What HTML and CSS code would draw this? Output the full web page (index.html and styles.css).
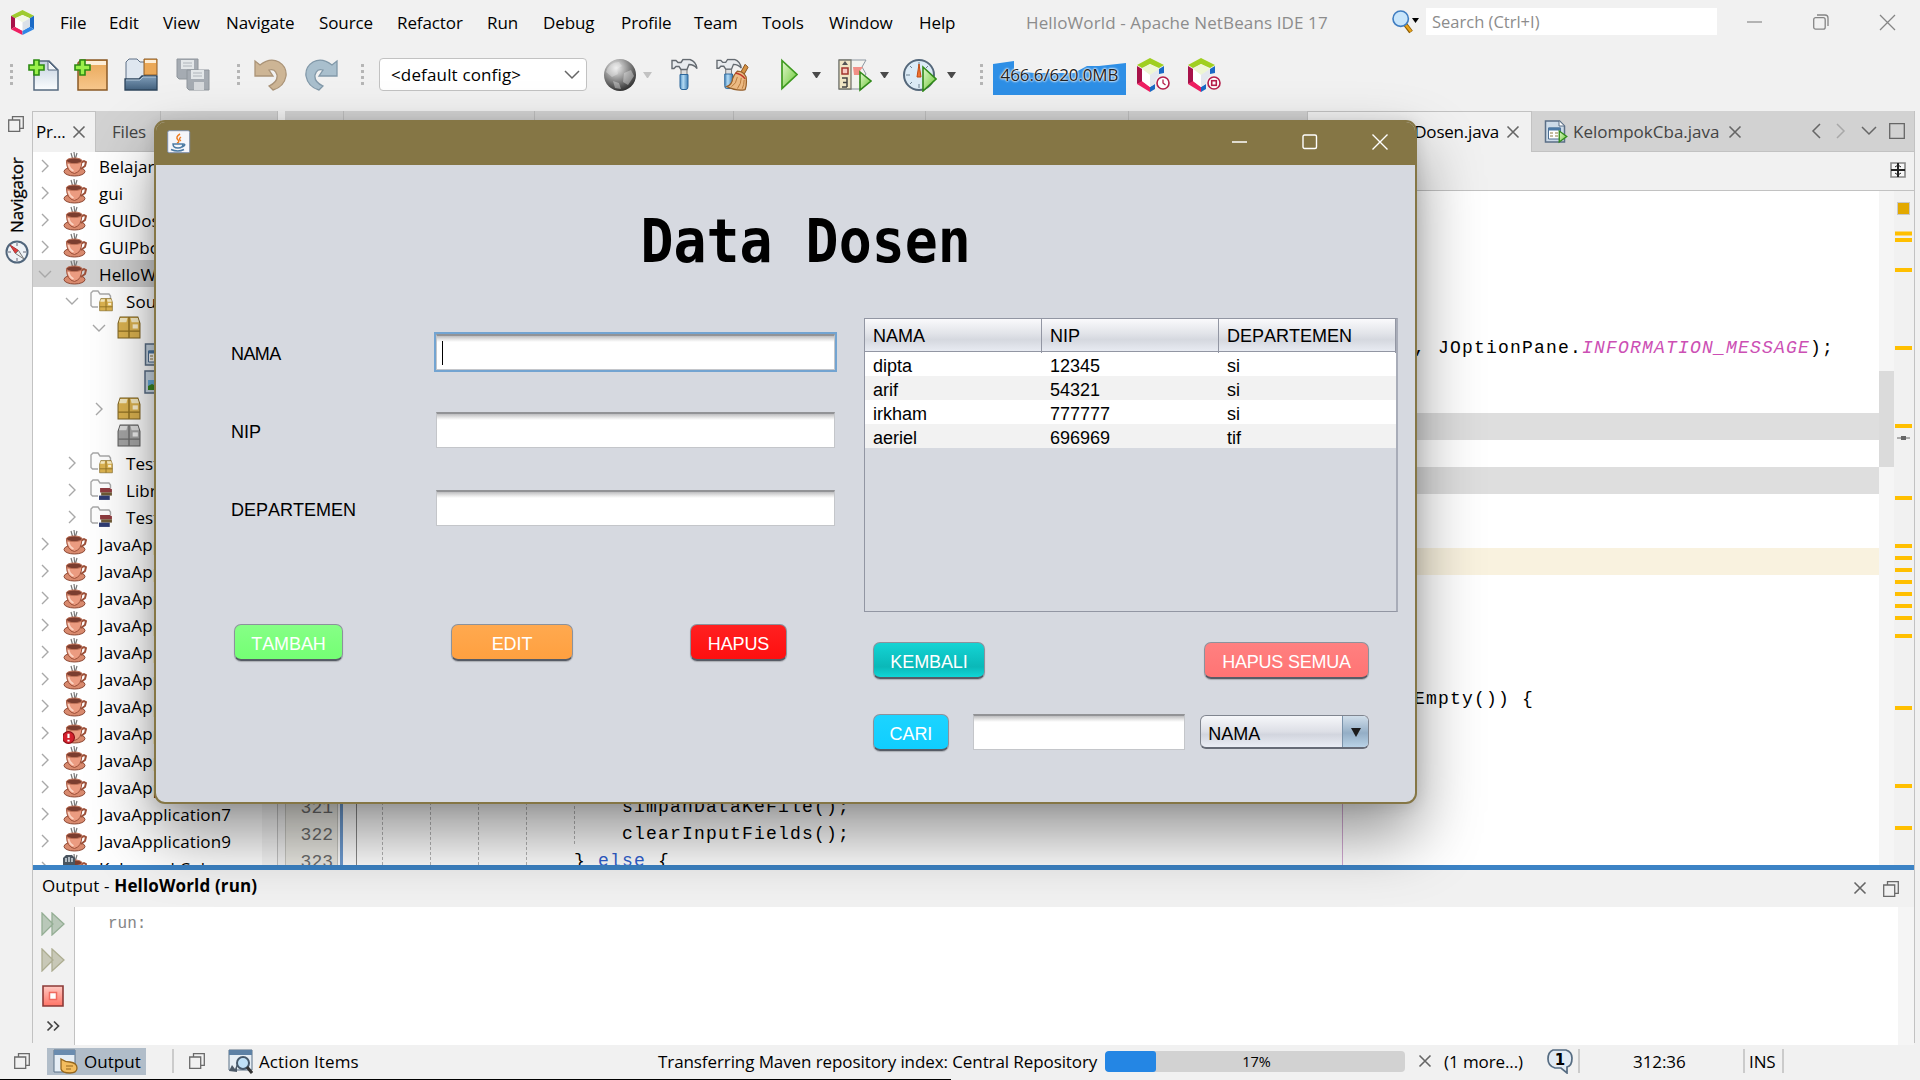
FILE: index.html
```html
<!DOCTYPE html>
<html lang="en">
<head>
<meta charset="utf-8">
<title>HelloWorld - Apache NetBeans IDE 17</title>
<link rel="stylesheet" href="styles.css">
</head>
<body>
<svg width="0" height="0" class="defs">
  <defs>
    <linearGradient id="gGreen" x1="0" y1="0" x2="1" y2="1"><stop offset="0" stop-color="#e3f7cf"/><stop offset="1" stop-color="#69c832"/></linearGradient>
    <linearGradient id="gPaper" x1="0" y1="0" x2="0" y2="1"><stop offset="0" stop-color="#c3d0df"/><stop offset="1" stop-color="#fbfdfe"/></linearGradient>
    <linearGradient id="gOrange" x1="0" y1="0" x2="0" y2="1"><stop offset="0" stop-color="#e9a758"/><stop offset="1" stop-color="#f7c78c"/></linearGradient>
    <linearGradient id="gSteel" x1="0" y1="0" x2="0" y2="1"><stop offset="0" stop-color="#7f9db9"/><stop offset="1" stop-color="#42607d"/></linearGradient>
    <linearGradient id="gBlue" x1="0" y1="0" x2="1" y2="0"><stop offset="0" stop-color="#4f8fc4"/><stop offset=".4" stop-color="#b5dcf5"/><stop offset="1" stop-color="#3f7fb5"/></linearGradient>
    <radialGradient id="gBall" cx=".38" cy=".28" r=".75"><stop offset="0" stop-color="#f2f2f2"/><stop offset=".45" stop-color="#9a9a9a"/><stop offset="1" stop-color="#2e2e2e"/></radialGradient>
    <linearGradient id="gStop" x1="0" y1="0" x2="0" y2="1"><stop offset="0" stop-color="#ffc9c2"/><stop offset="1" stop-color="#ff7466"/></linearGradient>
    <symbol id="cup" viewBox="0 0 24 25">
      <path d="M8 1l2 7M11 0l1 8M14 1l-2 7" stroke="#777" stroke-width="1.2" fill="none"/>
      <ellipse cx="11.500" cy="19.500" rx="10.500" ry="4.500" fill="#d98a6e" stroke="#8e4a36"/>
      <path d="M18 10.500l3-1.500 2 1-1 4-4 3" fill="none" stroke="#9c5039" stroke-width="2"/>
      <path d="M3.500 9q0 11 8 12.500 7-1.500 7.500-12.500z" fill="#eb9b80" stroke="#9c5039"/>
      <ellipse cx="11.200" cy="8.800" rx="7.800" ry="2.800" fill="#7b3d2f" stroke="#c07258"/>
      <path d="M5.500 12q1 5 5 7" stroke="#fbd3c2" stroke-width="1.800" fill="none"/>
    </symbol>
    <symbol id="pkg" viewBox="0 0 23 23">
      <path d="M3 1h17l2 6v14H1V7z" fill="#dcb350" stroke="#7d6320"/>
      <path d="M3 2h7l-1 4H2zM13 2h7l1 4h-7z" fill="#f6ebc4"/>
      <path d="M1 14.500h21M11.500 1v20" stroke="#8f7022" stroke-width="1.400"/>
      <path d="M15 8h5v4h-5z" fill="#fff3cf"/>
    </symbol>
    <symbol id="pkgGray" viewBox="0 0 23 23">
      <path d="M3 1h17l2 6v14H1V7z" fill="#a5a5a5" stroke="#5d5d5d"/>
      <path d="M3 2h7l-1 4H2zM13 2h7l1 4h-7z" fill="#dedede"/>
      <path d="M1 14.500h21M11.500 1v20" stroke="#6d6d6d" stroke-width="1.400"/>
      <path d="M15 8h5v4h-5z" fill="#eee"/>
    </symbol>
    <symbol id="folder" viewBox="0 0 22 21">
      <path d="M8 17H2.500L1 15.500V3l2-2h5l2 3h9l1.500 2v3" fill="#fdfdfd" stroke="#a8a8a8" stroke-width="1.400"/>
    </symbol>
    <symbol id="chevR" viewBox="0 0 12 14"><path d="M3 1l6 6-6 6" fill="none" stroke="#a8a8a8" stroke-width="1.400"/></symbol>
    <symbol id="chevD" viewBox="0 0 14 12"><path d="M1 3l6 6 6-6" fill="none" stroke="#a8a8a8" stroke-width="1.400"/></symbol>
    <symbol id="x" viewBox="0 0 14 14"><path d="M1.500 1.500l11 11M12.500 1.500l-11 11" fill="none" stroke="currentColor" stroke-width="1.600"/></symbol>
    <symbol id="float" viewBox="0 0 16 16"><path d="M4.500 4V.700h10.800v11.600H12M.700 4h11v11.300H.700z" fill="none" stroke="#6a6a6a" stroke-width="1.300"/></symbol>
    <symbol id="formfile" viewBox="0 0 24 24">
      <path d="M1.500 1h14l5 5v16h-19z" fill="#cddbe8" stroke="#5b6f86" stroke-width="1.500"/>
      <path d="M15 1v5h5" fill="#fff" stroke="#5b6f86"/>
      <path d="M4.500 8h12v11h-12z" fill="#fff" stroke="#4d6e91"/><path d="M4.500 9h12" stroke="#4d7aa7" stroke-width="3"/>
      <path d="M6 13h3m2 0h3M6 16h3m2 0h3" stroke="#8a7a42"/>
    </symbol>
    <symbol id="runBadge" viewBox="0 0 12 16"><path d="M1.500 1.500l9 6.500-9 6.500z" fill="url(#gGreen)" stroke="#318a1a" stroke-width="1.600"/></symbol>
    <symbol id="nb" viewBox="0 0 22 30">
      <path d="M11 0l11 7v16L11 30 0 23V7z" fill="#fff"/>
      <path d="M11 0l11 7-4 3-7-4-7 4-4-3z" fill="#9fcb2f"/>
      <path d="M0 7l4 3v10l-4 3z" fill="#a8124a"/><path d="M0 23l4-3 7 5v5z" fill="#ee1f61"/>
      <path d="M22 7l-4 3v10l4 3z" fill="#1b6ac6"/><path d="M22 23l-4-3-7 5v5z" fill="#2f86e6"/>
      <path d="M11 6l7 4-7 5-7-5z" fill="#f2f7e4"/><path d="M4 10l7 5v10l-7-5z" fill="#fff"/><path d="M18 10l-7 5v10l7-5z" fill="#dbe1e8"/>
    </symbol>
    <symbol id="nbBig" viewBox="0 0 34 34">
      <path d="M14 0l14 7-5 3-9-4-8 4-5-3z" fill="#a0cf20"/>
      <path d="M1 8l5 3v13l-5 2z" fill="#a8124a"/><path d="M1 26l5-3 8 6v5z" fill="#ee1f61"/>
      <path d="M28 8l-5 3v5l5-1zM14 29l5-3v5l-5 3z" fill="#1b6ac6"/>
      <path d="M14 6l9 5-9 6-8-6z" fill="#eef6d3"/><path d="M6 11l8 6v12l-8-6z" fill="#fff"/><path d="M23 11l-9 6v12l6-4 3-6z" fill="#e4e8ee"/>
      <circle cx="27" cy="25" r="8" fill="#f1f1f1"/><circle cx="27" cy="25" r="6" fill="#fff" stroke="#b51f4b" stroke-width="1.600"/>
    </symbol>
    <symbol id="hammer" viewBox="0 0 27 32">
      <path d="M10 11h6v8h-6z" fill="#ddd" stroke="#777"/>
      <path d="M1 2h4l2 2h3l2-3h7q6 2 7 9-3-4-8-4l-2 5h-6L8 8H5L3 10H1z" fill="#e8ebee" stroke="#646a70" stroke-width="1.400"/>
      <path d="M9 16h8v12q0 3-2 3h-4q-2 0-2-3z" fill="url(#gBlue)" stroke="#2d679b"/>
    </symbol>
    <symbol id="ff" viewBox="0 0 24 24"><path d="M1 1l11 11L1 23zM11 1l12 11-12 11z" stroke="currentColor" fill="currentColor" fill-opacity=".6" stroke-width="1.300"/></symbol>
    <symbol id="errors" viewBox="0 0 12 12"><circle cx="6" cy="6" r="5.500" fill="#d41f2c" stroke="#870d15"/><path d="M5 2.500h2v4H5zM5 8h2v1.800H5z" fill="#fff"/></symbol>
  </defs>
</svg>

<div class="ide">
  <header class="menubar">
    <svg class="logo" viewBox="0 0 22 30" preserveAspectRatio="none"><use href="#nb"/></svg>
    <nav class="menus"><span>File</span><span>Edit</span><span>View</span><span>Navigate</span><span>Source</span><span>Refactor</span><span>Run</span><span>Debug</span><span>Profile</span><span>Team</span><span>Tools</span><span>Window</span><span>Help</span></nav>
    <span class="app-title">HelloWorld - Apache NetBeans IDE 17</span>
    <svg class="search-icon" viewBox="0 0 28 24"><path d="M13 14l6 8" stroke="#8a5a00" stroke-width="4.500"/><path d="M13 14l6 7.500" stroke="#e8a21a" stroke-width="2.500"/><circle cx="8.700" cy="8.700" r="7.700" fill="#c8e5fb" stroke="#3f7dc1" stroke-width="1.600"/><path d="M20 8h7l-3.500 5z" fill="#000"/></svg>
    <span class="search">Search (Ctrl+I)</span>
    <span class="wincontrols">
      <svg width="16" height="16" viewBox="0 0 16 16"><path d="M0 8h15" stroke="#8b8b8b" stroke-width="1.200"/></svg>
      <svg width="16" height="16" viewBox="0 0 16 16"><rect x=".7" y="3.700" width="11.500" height="11.500" rx="2" fill="none" stroke="#858585" stroke-width="1.300"/><path d="M4 1h8q3 0 3 3v8" fill="none" stroke="#858585" stroke-width="1.300"/></svg>
      <svg width="17" height="17" viewBox="0 0 17 17"><path d="M1 1l15 15M16 1L1 16" stroke="#858585" stroke-width="1.300"/></svg>
    </span>
  </header>

  <div class="toolbar">
    <i class="grip"></i>
    <svg class="ic" viewBox="0 0 34 34"><path d="M6 3h15l9 9v20H6z" fill="url(#gPaper)" stroke="#56697f" stroke-width="1.500"/><path d="M20 3v9h9z" fill="#f4f7fa" stroke="#56697f"/><path d="M5 2h5v5h5v5h-5v5H5v-5H0V7h5z" transform="translate(1)" fill="#9af04a" stroke="#2c8a12" stroke-width="1.600"/></svg>
    <svg class="ic" viewBox="0 0 34 34"><path d="M4 5l3-3h26v30H4z" fill="url(#gOrange)" stroke="#8a5a26" stroke-width="1.500"/><path d="M7 3h25v4H6z" fill="#fdeed8"/><path d="M5 2h5v5h5v5h-5v5H5v-5H0V7h5z" transform="translate(1)" fill="#9af04a" stroke="#2c8a12" stroke-width="1.600"/></svg>
    <svg class="ic" viewBox="0 0 34 34"><path d="M2 31V4l3-3h8l3 3h5v27z" fill="#dfe7f0" stroke="#5e7187"/><path d="M20 1h13v16H20z" fill="#eba857" stroke="#8a5a26"/><path d="M21 2h11v3H21z" fill="#fdeed8"/><path d="M1 32V21h14l3-3h15v14z" fill="url(#gSteel)" stroke="#2e455c" stroke-width="1.300"/><path d="M2 22h14l3-3h13" fill="none" stroke="#b4c8da"/></svg>
    <svg class="ic dim" viewBox="0 0 34 34"><path d="M1 1h21v20H3l-2-2z" fill="#7d8791" stroke="#5c6670"/><path d="M5 2h13v9H5z" fill="#dde2e6"/><path d="M7 5h9M7 8h9" stroke="#8d969f"/><path d="M11 12h22v20H13l-2-2z" fill="#7d8791" stroke="#5c6670"/><path d="M15 12h13v9H15z" fill="#dde2e6"/><path d="M17 15h9M17 18h9" stroke="#8d969f"/><path d="M18 24h10v8H18z" fill="#c8cdd2"/></svg>
    <i class="grip"></i>
    <svg class="ic" viewBox="0 0 34 34"><path d="M1 3l5 4q10-8 19-3 8 5 7 14-2 11-13 14l-4-4q9-4 8-11-2-7-8-5l4 6H1z" fill="#cdb595" stroke="#ab9478" stroke-width="1.300"/></svg>
    <svg class="ic" viewBox="0 0 34 34"><path d="M33 3l-5 4Q18-1 9 4 1 9 2 18q2 11 13 14l4-4q-9-4-8-11 2-7 8-5l-4 6h18z" fill="#a9bfcd" stroke="#8299a9" stroke-width="1.300"/></svg>
    <i class="grip"></i>
    <div class="config"><span>&lt;default config&gt;</span><svg width="16" height="12" viewBox="0 0 16 12"><path d="M1 2l7 7 7-7" fill="none" stroke="#666" stroke-width="1.500"/></svg></div>
    <svg class="ic" viewBox="0 0 34 34"><circle cx="17" cy="17" r="16" fill="url(#gBall)"/><path d="M3 14q3-10 13-10l3 4-5 3 1 5-6 3zM21 15l7-3 3 6-6 9-5-3zM10 23l6 2 2 6-6-1z" fill="#ececec" opacity=".4"/></svg>
    <i class="arrow off"></i>
    <svg class="ic ic-h" viewBox="0 0 27 32"><use href="#hammer"/></svg>
    <svg class="ic" viewBox="0 0 35 34"><use href="#hammer" width="27" height="32"/><path d="M30 6l3 3-5 9-3-3z" fill="#d69446" stroke="#87501b"/><path d="M22 13q6 0 9 6 1 8-1 13-8 2-19-3 6-3 6-8 1-4 5-8z" fill="#edbb84" stroke="#96602b" stroke-width="1.300"/><path d="M22 19q-1 7-6 10M26 20q0 6-4 11M29 22q0 5-2 9" fill="none" stroke="#b97a3c"/><path d="M20 15q6 1 10 6" stroke="#c0392b" fill="none" stroke-width="1.500"/></svg>
    <svg class="ic ic-p" viewBox="0 0 18 32"><path d="M2 2l15 14L2 30z" fill="url(#gGreen)" stroke="#3f9a20" stroke-width="1.700"/></svg>
    <i class="arrow"></i>
    <svg class="ic" viewBox="0 0 34 34"><path d="M1 2h27l-4 7 4 7-6 8 2 7H1z" fill="#f3f3ef" stroke="#8d97a1"/><path d="M1 2h12v29H1z" fill="#f1e6c4" stroke="#77786f" stroke-width="1.300"/><path d="M7 3l3 4H4z" fill="#555"/><rect x="4" y="10" width="6" height="6" fill="#f8c9c2" stroke="#a2362d" stroke-width="1.500"/><path d="M15 9h10l-3 4 2 4h-8z" fill="#f29087"/><path d="M4 20h5v9M5 24.500h4M4 29h5" fill="none" stroke="#444" stroke-width="1.500"/><path d="M22 14l11 9-11 9z" fill="url(#gGreen)" stroke="#318a1a" stroke-width="1.600"/></svg>
    <i class="arrow"></i>
    <svg class="ic" viewBox="0 0 34 34"><circle cx="16" cy="17" r="15" fill="#dcebf6" stroke="#55687b" stroke-width="2"/><path d="M16 4v4M16 26v4M3 17h4M25 17h4M7 8l2 2M25 8l-2 2M7 26l2-2" stroke="#6f8292"/><path d="M16 6l2 13h-4z" fill="#ef7535" stroke="#c34b12"/><path d="M20 9l13 12-13 12z" fill="url(#gGreen)" stroke="#318a1a" stroke-width="1.600"/></svg>
    <i class="arrow"></i>
    <i class="grip"></i>
    <div class="memory"><svg viewBox="0 0 133 34" width="133" height="34"><path d="M0 3L21 0v10l20 2 40 0 13-7h12l27-3v32H0z" fill="#2e8fe6"/></svg><span>466.6/620.0MB</span></div>
    <svg class="ic" viewBox="0 0 34 34"><use href="#nbBig"/><path d="M27 21.500V25l2.500 2" stroke="#b51f4b" stroke-width="1.300" fill="none"/></svg>
    <svg class="ic" viewBox="0 0 34 34"><use href="#nbBig"/><rect x="24.700" y="22.700" width="4.600" height="4.600" fill="none" stroke="#b51f4b" stroke-width="1.600"/></svg>
  </div>

  <div class="work">
    <aside class="rail">
      <svg width="16" height="16"><use href="#float"/></svg>
      <span class="rail-label">Navigator</span>
      <svg width="24" height="24" viewBox="0 0 24 24"><circle cx="12" cy="12" r="10.500" fill="#eef2f6" stroke="#51667c" stroke-width="2"/><path d="M12 3v3M12 18v3M3 12h3M18 12h3" stroke="#667"/><path d="M5 5l8.500 5.500-3 3z" fill="#e23c3c" stroke="#a33"/><path d="M19 19l-8.500-5.500 3-3z" fill="#eee" stroke="#777"/></svg>
    </aside>

    <div class="main">
      <div class="upper">
        <section class="projects">
          <div class="tabs">
            <span class="tab active">Pr...<svg width="14" height="14"><use href="#x"/></svg></span>
            <span class="tab plain">Files</span>
          </div>
          <div class="tree">
            <div class="rows">
              <div class="row"><svg class="ch"><use href="#chevR"/></svg><svg class="cup"><use href="#cup"/></svg><span>BelajarGUI</span></div>
              <div class="row"><svg class="ch"><use href="#chevR"/></svg><svg class="cup"><use href="#cup"/></svg><span>gui</span></div>
              <div class="row"><svg class="ch"><use href="#chevR"/></svg><svg class="cup"><use href="#cup"/></svg><span>GUIDosen</span></div>
              <div class="row"><svg class="ch"><use href="#chevR"/></svg><svg class="cup"><use href="#cup"/></svg><span>GUIPbo</span></div>
              <div class="row selected"><svg class="ch"><use href="#chevD"/></svg><svg class="cup"><use href="#cup"/></svg><span>HelloWorld</span></div>
              <div class="row l1"><svg class="ch"><use href="#chevD"/></svg><span class="fold"><svg class="fo"><use href="#folder"/></svg><svg class="bd"><use href="#pkg"/></svg></span><span>Source</span></div>
              <div class="row l2"><svg class="ch"><use href="#chevD"/></svg><svg class="pk"><use href="#pkg"/></svg></div>
              <div class="row l3"><svg class="pk"><use href="#formfile"/></svg></div>
              <div class="row l3"><svg class="pk" viewBox="0 0 24 24"><path d="M1 1h22v22H1z" fill="#cddbe8" stroke="#5b6f86" stroke-width="1.500"/><path d="M4 10h10v10H4z" fill="#6ab0e0"/><path d="M4 16l4-2 4 2v4H4z" fill="#3b8a22"/></svg></div>
              <div class="row l2"><svg class="ch"><use href="#chevR"/></svg><svg class="pk"><use href="#pkg"/></svg></div>
              <div class="row l2"><i class="ch"></i><svg class="pk"><use href="#pkgGray"/></svg></div>
              <div class="row l1"><svg class="ch"><use href="#chevR"/></svg><span class="fold"><svg class="fo"><use href="#folder"/></svg><svg class="bd"><use href="#pkg"/></svg></span><span>Test</span></div>
              <div class="row l1"><svg class="ch"><use href="#chevR"/></svg><span class="fold"><svg class="fo"><use href="#folder"/></svg><svg class="bd" viewBox="0 0 13 13"><path d="M1 1h9l2 1v3H1z" fill="#8e3b3f"/><path d="M2 5h10v3H2z" fill="#6e5a35"/><path d="M0 8h10v4H0z" fill="#2f3c72"/></svg></span><span>Libra</span></div>
              <div class="row l1"><svg class="ch"><use href="#chevR"/></svg><span class="fold"><svg class="fo"><use href="#folder"/></svg><svg class="bd" viewBox="0 0 13 13"><path d="M1 1h9l2 1v3H1z" fill="#8e3b3f"/><path d="M2 5h10v3H2z" fill="#6e5a35"/><path d="M0 8h10v4H0z" fill="#2f3c72"/></svg></span><span>Test</span></div>
              <div class="row"><svg class="ch"><use href="#chevR"/></svg><svg class="cup"><use href="#cup"/></svg><span>JavaApp</span></div>
              <div class="row"><svg class="ch"><use href="#chevR"/></svg><svg class="cup"><use href="#cup"/></svg><span>JavaApp</span></div>
              <div class="row"><svg class="ch"><use href="#chevR"/></svg><svg class="cup"><use href="#cup"/></svg><span>JavaApp</span></div>
              <div class="row"><svg class="ch"><use href="#chevR"/></svg><svg class="cup"><use href="#cup"/></svg><span>JavaApp</span></div>
              <div class="row"><svg class="ch"><use href="#chevR"/></svg><svg class="cup"><use href="#cup"/></svg><span>JavaApp</span></div>
              <div class="row"><svg class="ch"><use href="#chevR"/></svg><svg class="cup"><use href="#cup"/></svg><span>JavaApp</span></div>
              <div class="row"><svg class="ch"><use href="#chevR"/></svg><svg class="cup"><use href="#cup"/></svg><span>JavaApp</span></div>
              <div class="row"><svg class="ch"><use href="#chevR"/></svg><svg class="cup" viewBox="0 0 24 25"><use href="#cup"/><use href="#errors" x="-1" y="12" width="13" height="13"/></svg><span>JavaApp</span></div>
              <div class="row"><svg class="ch"><use href="#chevR"/></svg><svg class="cup"><use href="#cup"/></svg><span>JavaApp</span></div>
              <div class="row"><svg class="ch"><use href="#chevR"/></svg><svg class="cup"><use href="#cup"/></svg><span>JavaApp</span></div>
              <div class="row"><svg class="ch"><use href="#chevR"/></svg><svg class="cup"><use href="#cup"/></svg><span>JavaApplication7</span></div>
              <div class="row"><svg class="ch"><use href="#chevR"/></svg><svg class="cup"><use href="#cup"/></svg><span>JavaApplication9</span></div>
              <div class="row"><svg class="ch"><use href="#chevR"/></svg><svg class="cup" viewBox="0 0 24 25"><use href="#cup"/><path d="M0 14V4l3-3h6l3 3v10z" fill="#4a5560"/><path d="M3 4v4M6 3v5M9 4v4" stroke="#dfe6ec" stroke-width="1.400"/></svg><span>KelompokCoba</span></div>
            </div>
            <i class="tree-scroll"></i>
          </div>
        </section>

        <section class="editor">
          <div class="tabs">
            <span class="tab bg w1"></span><span class="tab bg"><svg width="24" height="24"><use href="#formfile"/></svg></span><span class="tab bg w3"><svg width="24" height="24"><use href="#formfile"/></svg></span><span class="tab bg w4"><svg width="24" height="24"><use href="#formfile"/></svg></span><span class="tab bg w5"><svg width="24" height="24"><use href="#formfile"/></svg></span><span class="tab bg w6"><svg width="24" height="24"><use href="#formfile"/></svg></span>
            <span class="tab current"><svg width="24" height="24"><use href="#formfile"/></svg><b class="tname">GUIDosen.java</b><svg width="14" height="14"><use href="#x"/></svg></span>
            <span class="tab other"><svg width="24" height="24" viewBox="0 0 24 24"><use href="#formfile"/><use href="#runBadge" x="14" y="9" width="10" height="15"/></svg><b class="tname">KelompokCba.java</b><svg width="14" height="14"><use href="#x"/></svg></span>
            <span class="tabnav">
              <svg width="10" height="16" viewBox="0 0 10 16"><path d="M9 1L2 8l7 7" fill="none" stroke="#666" stroke-width="1.500"/></svg>
              <svg width="10" height="16" viewBox="0 0 10 16"><path d="M1 1l7 7-7 7" fill="none" stroke="#a8a8a8" stroke-width="1.500"/></svg>
              <svg width="16" height="12" viewBox="0 0 16 12"><path d="M1 2l7 7 7-7" fill="none" stroke="#666" stroke-width="1.500"/></svg>
              <svg width="16" height="16" viewBox="0 0 16 16"><path d="M.7.700h14.600v14.600H.700z" fill="none" stroke="#666" stroke-width="1.300"/></svg>
            </span>
          </div>
          <div class="edbar"><svg width="16" height="16" viewBox="0 0 16 16"><path d="M1 1h14v14H1z" fill="#f7f7f7" stroke="#888" stroke-width="1.600"/><path d="M8 1v14M1 8h14" stroke="#222" stroke-width="2"/><path d="M5 5l3-2 3 2M5 11l3 2 3-2" fill="none" stroke="#222"/></svg></div>
          <div class="code-area">
            <div class="gutter"><span>321</span><span>322</span><span>323</span></div>
            <i class="diff"></i><i class="foldline"></i>
            <div class="code">
              <i class="guide g1"></i><i class="guide g2"></i><i class="guide g3"></i><i class="guide g4"></i><i class="guide g5"></i><i class="margin-line"></i>
              <pre class="line first"></pre>
              <pre class="line"></pre><pre class="line"></pre><pre class="line"></pre><pre class="line"></pre><pre class="line"></pre>
              <pre class="line far2">, JOptionPane.<em>INFORMATION_MESSAGE</em>);</pre>
              <pre class="line"></pre><pre class="line"></pre>
              <pre class="line occ"></pre><pre class="line"></pre><pre class="line occ"></pre>
              <pre class="line"></pre><pre class="line"></pre>
              <pre class="line caret-line"></pre>
              <pre class="line"></pre><pre class="line"></pre><pre class="line"></pre><pre class="line"></pre>
              <pre class="line far2">Empty()) {</pre>
              <pre class="line"></pre><pre class="line"></pre><pre class="line"></pre>
              <pre class="line c20">simpanDataKeFile();</pre>
              <pre class="line c20">clearInputFields();</pre>
              <pre class="line c16">} <b class="kw">else</b> {</pre>
            </div>
            <div class="vscroll"><i></i></div>
            <div class="stripe">
              <svg width="20" height="674" viewBox="0 191 20 674"><rect x="3" y="202" width="13" height="13" fill="#c9c9c9"/><rect x="4" y="203" width="11" height="11" fill="#e3a900"/><path d="M9.500 231.500v4M9.500 238v4M9.500 268v4M9.500 346v4M9.500 424v4M9.500 496v4M9.500 544v4M9.500 556v4M9.500 568v4M9.500 580v4M9.500 592v4M9.500 604v4M9.500 616v4M9.500 634v4M9.500 706v4M9.500 784v4M9.500 826v4" stroke="#ffbf00" stroke-width="17"/><path d="M3 438h13" stroke="#666"/><path d="M7 436h5v4H7z" fill="#666"/></svg>
            </div>
          </div>
        </section>
      </div>

      <section class="output">
        <div class="out-head"><span>Output - <b>HelloWorld (run)</b></span><span class="out-ctl"><svg width="14" height="14"><use href="#x"/></svg><svg width="16" height="16"><use href="#float"/></svg></span></div>
        <div class="out-body">
          <div class="out-tools">
            <svg class="ff1" width="24" height="24"><use href="#ff"/></svg>
            <svg class="ff2" width="24" height="24"><use href="#ff"/></svg>
            <svg width="22" height="22" viewBox="0 0 22 22"><path d="M1 1h20v20H1z" fill="url(#gStop)" stroke="#8c3a37" stroke-width="1.600"/><path d="M7.500 7.500h7v7h-7z" fill="#fff" stroke="#ef6a60" stroke-width="1.500"/></svg>
            <svg width="14" height="12" viewBox="0 0 14 12"><path d="M1.500 1.500L6 6l-4.500 4.500M8 1.500L12.500 6 8 10.500" fill="none" stroke="#444" stroke-width="1.700"/></svg>
          </div>
          <pre class="console">run:</pre>
          <i class="out-scroll"></i>
        </div>
      </section>
    </div>
  </div>

  <footer class="status">
    <svg width="16" height="16"><use href="#float"/></svg>
    <span class="st-btn"><svg width="25" height="25" viewBox="0 0 25 25"><path d="M1 1h21v22H1z" fill="#e6eef5" stroke="#5b7086"/><path d="M1 1h21v5H1z" fill="#6a8caf"/><path d="M8 10q4 3 9 3 7 1 7 6 0 5-7 5-8 0-9-4z" fill="#f3bd5e" stroke="#95661c" stroke-width="1.300"/><path d="M13 17h7M13 20h5" stroke="#95661c"/></svg><span>Output</span></span>
    <i class="sep"></i>
    <svg width="16" height="16"><use href="#float"/></svg>
    <svg width="25" height="25" viewBox="0 0 25 25"><path d="M1 1h23v20H1z" fill="#e6eef5" stroke="#5b7086"/><path d="M1 1h23v5H1z" fill="#5d81a5"/><path d="M1 22l3-6 3 4 2-5v8z" fill="#4d5a68"/><circle cx="15" cy="14" r="6" fill="#bfe0f7" stroke="#45586b" stroke-width="2"/><path d="M19 18l5 6" stroke="#333" stroke-width="3"/></svg>
    <span class="ai">Action Items</span>
    <span class="task">Transferring Maven repository index: Central Repository</span>
    <div class="progress"><i></i><span>17%</span></div>
    <svg class="stx" width="14" height="14"><use href="#x"/></svg>
    <span class="more">(1 more...)</span>
    <svg class="bubble" width="26" height="25" viewBox="0 0 26 25"><path d="M6 1h13q6 2 6 8 0 8-5 9v6l-6-5H8q-7-2-7-9 0-7 5-9z" fill="#e2ebf4" stroke="#566c82" stroke-width="1.700"/><text x="13" y="15.500" text-anchor="middle" font-family="DejaVu Sans" font-weight="bold" font-size="15">1</text></svg>
    <i class="sep s2"></i>
    <span class="pos">312:36</span>
    <i class="sep s3"></i>
    <span class="ins">INS</span>
    <i class="sep s4"></i>
  </footer>
</div>
<i class="bottom-line"></i>

<div class="dialog">
  <div class="dlg-title">
    <svg width="24" height="24" viewBox="0 0 24 24"><rect x=".7" y=".7" width="22" height="22" rx="1.500" fill="#f5f6fa" stroke="#7d8ea8"/><path d="M13 4q-5 3-2 6 2 2-1 3M14 7q-3 2 0 4" fill="none" stroke="#ee7d22" stroke-width="1.500"/><path d="M6 14h10q0 4-5 4t-5-4zM16 14q3 0 1 2l-2 1M4 19.500q7 3 13 0" fill="none" stroke="#4c7ba4" stroke-width="1.500"/></svg>
    <span class="dlg-ctl">
      <svg width="16" height="16" viewBox="0 0 16 16"><path d="M0 8h15" stroke="#fff" stroke-width="1.300"/></svg>
      <svg width="16" height="16" viewBox="0 0 16 16"><rect x="1" y="1" width="13.500" height="13.500" rx="1.500" fill="none" stroke="#fff" stroke-width="1.400"/></svg>
      <svg width="16" height="16" viewBox="0 0 16 16"><path d="M.5.500l15 15M15.500.500l-15 15" stroke="#fff" stroke-width="1.400"/></svg>
    </span>
  </div>
  <div class="dlg-body">
    <h1><span>Data Dosen</span></h1>
    <div class="cols">
      <div class="left">
        <div class="frow"><label class="tight">NAMA</label><div class="field focus"><i class="caret"></i></div></div>
        <div class="frow"><label>NIP</label><div class="field"></div></div>
        <div class="frow"><label>DEPARTEMEN</label><div class="field"></div></div>
        <div class="btns"><span class="btn tambah">TAMBAH</span><span class="btn edit">EDIT</span><span class="btn hapus">HAPUS</span></div>
      </div>
      <div class="right">
        <div class="table">
          <div class="tr th"><span>NAMA</span><span>NIP</span><span>DEPARTEMEN</span></div>
          <div class="tr"><span>dipta</span><span>12345</span><span>si</span></div>
          <div class="tr"><span>arif</span><span>54321</span><span>si</span></div>
          <div class="tr"><span>irkham</span><span>777777</span><span>si</span></div>
          <div class="tr"><span>aeriel</span><span>696969</span><span>tif</span></div>
        </div>
        <div class="rrow"><span class="btn kembali">KEMBALI</span><span class="btn semua">HAPUS SEMUA</span></div>
        <div class="rrow second"><span class="btn cari">CARI</span><div class="field small"></div><div class="combo"><span>NAMA</span><i><svg width="10" height="9" viewBox="0 0 10 9"><path d="M0 0h10L5 9z" fill="#1c1c1c"/></svg></i></div></div>
      </div>
    </div>
  </div>
</div>
</body>
</html>
```
FILE: styles.css
```css
* { box-sizing: border-box; }
html, body { margin: 0; height: 100%; overflow: hidden; }
body { font: 17px/24px "Open Sans", "Noto Sans", sans-serif; color: #000; background: #f1f1f1; position: relative; width: 1920px; height: 1080px; }
i { font-style: normal; display: block; }
svg { display: block; flex: none; }
.defs { position: absolute; }
pre { margin: 0; }
.ide { display: flex; flex-direction: column; width: 1920px; height: 1080px; }

/* menu bar */
.menubar { height: 44px; flex: none; display: grid; grid-template-columns: 60px 966px 366px 34px 291px 1fr; align-items: center; white-space: nowrap; }
.logo { width: 23px; height: 25px; margin-left: 11px; }
.menus { display: grid; grid-template-columns: 49px 54px 63px 93px 78px 90px 56px 78px 73px 68px 67px 90px 47px; letter-spacing: -.1px; padding-top: 1px; }
.app-title { color: #8c8c8c; letter-spacing: .12px; padding-top: 1px; }
.search-icon { width: 28px; height: 24px; }
.search { background: #fff; height: 27px; line-height: 28px; padding-left: 6px; color: #8c8c8c; font-size: 16.5px; margin-top: -1px; }
.wincontrols { display: flex; gap: 50px; padding-left: 30px; align-items: center; }

/* main toolbar */
.toolbar { height: 67px; flex: none; display: grid; align-items: start; padding-top: 14px; grid-template-columns: 28px 46px 50px 52px 61px 17px 50px 57px 18px 224px 40px 28px 45px 64px 32px 26px 42px 23px 44px 33px 13px 143px 51px 50px; }
.grip { width: 3px; height: 22px; margin: 6px 0 0 10px; background: radial-gradient(circle at 1.500px 1.500px, #b5b5b5 1.400px, transparent 1.700px) 0 0 / 3px 6px; }
.toolbar .grip ~ .grip { margin-left: 0; }
.ic { width: 34px; height: 34px; }
.ic-h { width: 27px; height: 33px; }
.ic-p { width: 18px; height: 33px; }
.dim { opacity: .65; }
.config { width: 208px; height: 33px; border: 1px solid #c2c2c2; border-radius: 4px; background: #fff; display: flex; align-items: center; justify-content: space-between; padding: 0 6px 0 11px; letter-spacing: .15px; }
.arrow { width: 9px; border: 4.500px solid transparent; border-top: 6px solid #4a4a4a; border-bottom: 0; margin-top: 14px; }
.arrow.off { border-top-color: #c2c2c2; }
.memory { display: grid; width: 133px; height: 34px; margin-top: 3px; }
.memory > * { grid-area: 1 / 1; }
.memory span { text-align: center; line-height: 28px; letter-spacing: -.1px; color: #222; text-shadow: 0 0 2px #fff, 0 0 2px #fff, 0 0 3px #fff; }

/* work area */
.work { display: flex; height: 932px; flex: none; }
.rail { width: 33px; flex: none; display: flex; flex-direction: column; padding: 5px 0 0 5px; border-right: 1px solid #c2c2c2; }
.rail > svg:first-child { margin-left: 3px; }
.rail-label { writing-mode: vertical-rl; transform: rotate(180deg); height: 83px; width: 24px; line-height: 24px; margin: 18px 0 7px; text-align: left; letter-spacing: -.15px; -webkit-text-stroke: .3px #000; }
.main { width: 1882px; flex: none; border-right: 1px solid #c2c2c2; border-bottom: 1px solid #c2c2c2; display: flex; flex-direction: column; }
.upper { display: flex; height: 754px; flex: none; }
.tabs { height: 41px; flex: none; display: flex; background: #d2d2d2; border-bottom: 1px solid #c2c2c2; letter-spacing: -.2px; white-space: nowrap; }
.tab { display: flex; align-items: center; flex: none; height: 41px; }
.tab svg { color: #666; }
.projects { width: 245px; flex: none; margin-right: 7px; border-right: 1px solid #c2c2c2; display: flex; flex-direction: column; }
.projects .active { width: 63px; padding: 0 9px 0 3px; justify-content: space-between; background: #f1f1f1; border: solid #c2c2c2; border-width: 1px 1px 0 0; }
.plain { width: 65px; padding-left: 16px; color: #444; border-right: 1px solid #bbb; }
.tree { flex: 1; display: flex; background: #fff; overflow: hidden; height: 713px; }
.rows { width: 229px; flex: none; white-space: nowrap; letter-spacing: .1px; }
.tree-scroll { flex: 1; background: #f5f5f5; }
.row { height: 27px; display: flex; align-items: center; padding-left: 5px; }
.row > span:last-child { line-height: 27px; padding-top: 2px; }
.selected { background: #d2d2d2; width: 244px; }
.ch { width: 14px; height: 14px; margin-right: 12px; flex: none; }
.cup { width: 24px; height: 25px; margin: -2px 12px 0 -1px; }
.l1 { padding-left: 32px; }
.l2 { padding-left: 59px; }
.l3 { padding-left: 111px; }
.fold { position: relative; width: 24px; height: 22px; margin: 0 12px 0 -1px; }
.fo { width: 22px; height: 21px; }
.bd { position: absolute; left: 9px; top: 8px; width: 14px; height: 14px; }
.pk { width: 24px; height: 24px; }
.l2 .pk { margin-left: -1px; }

/* editor */
.editor { flex: 1; display: flex; flex-direction: column; min-width: 0; }
.bg { width: 191px; padding-left: 11px; border-right: 1px solid #bdbdbd; }
.w1 { width: 59px; } .w3 { width: 199px; } .w4 { width: 192px; } .w5 { width: 203px; } .w6 { width: 178px; border-right: 0; }
.current { width: 225px; padding: 0 11px 0 10px; background: #f1f1f1; border: solid #c2c2c2; border-width: 1px 1px 0 1px; }
.tname { font-weight: normal; }
.current .tname { flex: 1; text-align: right; margin-right: 7px; }
.other { width: 279px; padding-left: 12px; }
.other .tname { margin: 0 7px 0 5px; color: #444; width: 148px; letter-spacing: 0; }
.tabnav { display: flex; align-items: center; }
.tabnav svg { margin-right: 15px; }
.tabnav svg:nth-child(3) { margin-right: 12px; }
.edbar { height: 39px; flex: none; border-bottom: 1px solid #c2c2c2; padding: 10px 0 0 1605px; }
.code-area { display: flex; height: 674px; overflow: hidden; background: #fff; }
.gutter { width: 53px; background: #e9e8e2; border: solid #c6c6c0; border-width: 0 1px; padding: 602px 4px 0 0; text-align: right; font: 18px/27px "Liberation Mono", monospace; color: #6b6b6b; flex: none; }
.gutter span { display: block; height: 27px; padding-top: 2px; }
.diff { width: 3px; background: #6d9bd1; margin-left: 2px; flex: none; }
.foldline { width: 14px; border-right: 1px solid #888; flex: none; }
.code { width: 1522px; flex: none; position: relative; overflow: hidden; }
.line { height: 27px; font: 18px/27px "Liberation Mono", "DejaVu Sans Mono", monospace; letter-spacing: 1.200px; padding-top: 3px; padding-left: 25px; position: relative; }
.first { height: 6px; }
.line em { color: #cc4fb4; }
.kw { font-weight: normal; color: #2f5fd0; }
.occ { background: #dedede; }
.caret-line { background: #f9f2df; }
.far2 { padding-left: 1057px; }
.c20 { padding-left: 265px; }
.c16 { padding-left: 217px; }
.guide { position: absolute; top: 0; bottom: 0; width: 0; border-left: 1px dashed #b5b5b5; }
.g1 { left: 25px; } .g2 { left: 73px; } .g3 { left: 121px; } .g4 { left: 169px; } .g5 { left: 217px; bottom: 21px; }
.margin-line { position: absolute; top: 0; bottom: 0; left: 985px; width: 1px; background: #d3a9d3; }
.vscroll { width: 15px; background: #f5f5f5; padding-top: 180px; flex: none; }
.vscroll i { height: 96px; background: #dbdbdb; }
.stripe { width: 20px; background: #f1f1f1; flex: none; }

/* output */
.output { border-top: 5px solid #3c83c5; flex: 1; display: flex; flex-direction: column; }
.out-head { height: 37px; display: flex; justify-content: space-between; padding: 4px 15px 0 9px; letter-spacing: .15px; }
.out-head b { letter-spacing: .15px; }
.out-ctl { display: flex; gap: 16px; padding-top: 7px; color: #666; }
.out-body { flex: 1; display: flex; background: #fff; }
.out-tools { width: 42px; background: #f1f1f1; border-right: 1px solid #c2c2c2; display: flex; flex-direction: column; align-items: center; padding: 5px 1px 0 0; }
.out-tools svg { margin-bottom: 13px; }
.out-tools .ff1 { margin-bottom: 12px; }
.ff1 { color: #94ae94; } .ff2 { color: #adad91; }
.console { flex: 1; padding: 5px 0 0 33px; font: 16px/24px "Liberation Mono", monospace; color: #858585; }
.out-scroll { width: 16px; background: #f5f5f5; }

/* status bar */
.status { height: 37px; flex: none; display: grid; align-items: center; padding: 0 0 1px 14px; grid-template-columns: 33px 125px 17px 39px 31px 399px 447px 313px 26px 103px 31px 55px 110px 6px 33px 1fr; letter-spacing: -.09px; white-space: nowrap; }
.status > span { padding-top: 1px; }
.ai { letter-spacing: .1px; }
.st-btn { width: 99px; height: 27px; background: #b1bdc9; display: flex; align-items: center; gap: 6px; padding-left: 6px; letter-spacing: .05px; }
.sep { width: 2px; height: 24px; background: #cbcbcb; }
.progress { width: 300px; height: 21px; background: #d2d2d2; border-radius: 4px; display: grid; overflow: hidden; }
.progress > * { grid-area: 1 / 1; }
.progress i { width: 51px; background: #2486e4; border-radius: 3px; }
.progress span { font-size: 14.5px; line-height: 21px; text-align: center; padding-left: 3px; }
.stx { color: #666; }
.bottom-line { position: absolute; left: 0; top: 1079px; width: 951px; height: 1px; background: #000; }

/* Swing dialog floating over the IDE */
.dialog { position: absolute; left: 154px; top: 120px; width: 1263px; height: 684px; border: 2px solid #857645; border-radius: 11px; background: #d6d9e0; overflow: hidden; box-shadow: 0 32px 64px rgba(0,0,0,.42), 0 2px 16px rgba(0,0,0,.12); font: 18px/24px "Liberation Sans", Arial, sans-serif; font-kerning: none; }
.dlg-title { height: 43px; background: #857645; display: flex; justify-content: space-between; padding: 8px 27px 0 11px; }
.dlg-ctl { display: flex; gap: 54px; padding-top: 4px; }
.dlg-body h1 { margin: 0; height: 148px; padding-top: 40px; text-align: center; font: bold 60px/72px "DejaVu Sans Mono", monospace; padding-left: 41px; }
.dlg-body h1 span { display: inline-block; transform: scaleX(.914); }
.cols { display: flex; }
.left { width: 708px; padding-left: 75px; flex: none; }
.frow { height: 78px; display: grid; grid-template-columns: 205px 1fr; align-items: center; padding-right: 29px; }
.frow label { padding-bottom: 1px; margin-top: 4px; }
.tight { letter-spacing: -.6px; }
.field { height: 36px; background: linear-gradient(#bdbdbf, #ececec 4px, #fff 6px); border: 1px solid #c4c6ca; border-top: 2px solid #929396; }
.focus { box-shadow: 0 0 0 2px #73a4d1; }
.caret { width: 1px; height: 24px; margin: 5px 0 0 5px; background: #000; }
.btns { display: grid; grid-template-columns: 217px 239px 97px; margin: 77px 0 0 3px; }
.btn { height: 37px; border: 1px solid #8c929c; border-bottom: 2px solid #575c66; border-radius: 7px; color: #fff; text-align: center; line-height: 36px; padding-top: 1px; letter-spacing: -.1px; display: block; box-shadow: 0 1px 1px rgba(0,0,0,.2); }
.tambah { width: 109px; background: linear-gradient(#86ff86, #74ff74); }
.edit { width: 122px; background: linear-gradient(#ffa94f, #ffa040); }
.hapus { width: 97px; background: linear-gradient(#ff2020, #ff0f0f); }
.kembali { width: 112px; background: linear-gradient(#14d4d4, #0ab8b8 70%, #10d6d6); }
.semua { width: 165px; background: linear-gradient(#ff8080, #ff7474); letter-spacing: -.25px; }
.cari { width: 76px; background: linear-gradient(#1cd4ff, #10ceff); }
.right { width: 534px; padding-top: 5px; }
.table { height: 294px; border: 1px solid #9296a3; border-right: 2px solid #a8acb8; }
.tr { display: grid; grid-template-columns: 177px 177px 1fr; height: 24px; line-height: 28px; background: #fff; }
.tr span { padding-left: 8px; }
.tr:nth-child(odd):not(.th) { background: #f2f2f2; }
.th { height: 33px; line-height: 34px; background: linear-gradient(#fafafc, #e2e4e9 45%, #d5d8df 65%, #e8ebf2); border-bottom: 1px solid #9296a3; }
.th span { border-right: 1px solid #9296a3; }
.rrow { display: flex; justify-content: space-between; padding: 0 29px 0 9px; margin-top: 30px; }
.second { margin-top: 35px; justify-content: flex-start; align-items: flex-start; }
.small { width: 213px; margin: 0 15px 0 24px; }
.combo { width: 169px; height: 34px; margin-top: 1px; border: 1px solid #80858f; border-bottom: 2px solid #666b77; border-radius: 6px; background: linear-gradient(#f6f7fa, #dddfe6 50%, #d2d5de 60%, #eaedf5); display: flex; justify-content: space-between; overflow: hidden; padding-left: 7px; line-height: 36px; }
.combo i { width: 26px; background: linear-gradient(#d0deea, #94aec6 55%, #b9d2e6); border-left: 1px solid #7b93aa; padding: 12px 0 0 8px; }
```
